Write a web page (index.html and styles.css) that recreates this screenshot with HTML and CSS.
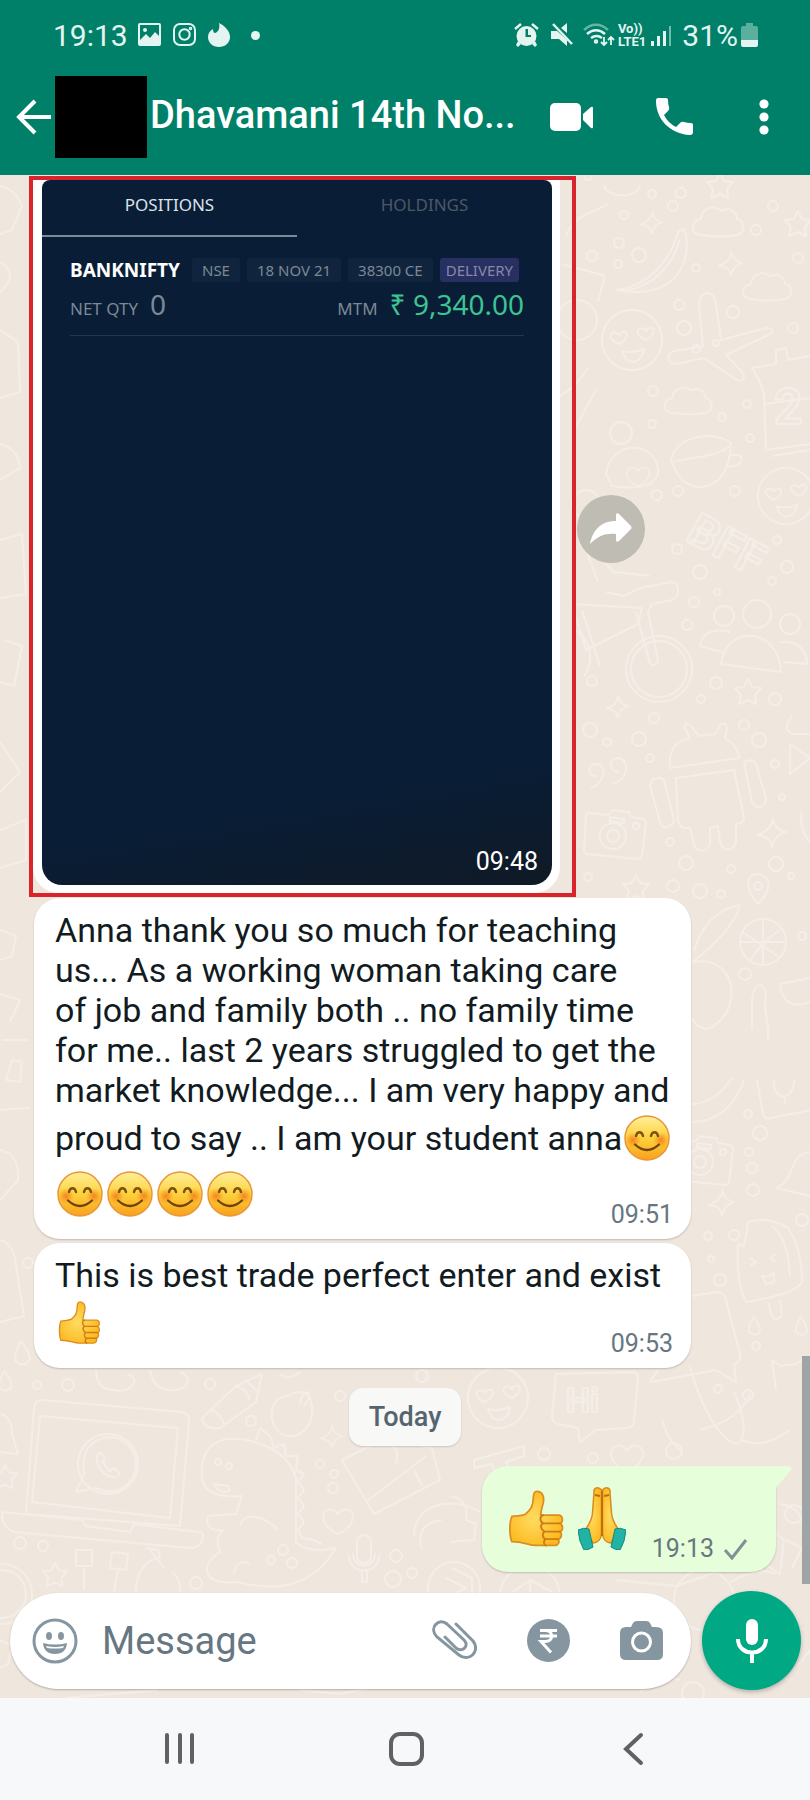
FILE: index.html
```html
<!DOCTYPE html>
<html lang="en">
<head>
  <meta charset="utf-8">
  <meta name="viewport" content="width=device-width, initial-scale=1">
  <title>Dhavamani 14th No...</title>
  <link rel="stylesheet" href="styles.css">
</head>
<body>
  <!-- shared emoji and doodle symbols -->
  <svg class="symbols" aria-hidden="true">
    <defs>
      <linearGradient id="face-fill" x1="0" y1="0" x2="0" y2="1">
        <stop offset="0" stop-color="#fff09a"/>
        <stop offset="0.5" stop-color="#fdd13c"/>
        <stop offset="1" stop-color="#f9a01b"/>
      </linearGradient>
      <radialGradient id="blush">
        <stop offset="0" stop-color="#f4701a" stop-opacity="0.8"/>
        <stop offset="1" stop-color="#f4801a" stop-opacity="0"/>
      </radialGradient>
      <radialGradient id="hand-fill" cx="0.45" cy="0.5" r="0.6">
        <stop offset="0" stop-color="#ffdc62"/>
        <stop offset="1" stop-color="#fbb81c"/>
      </radialGradient>
      <symbol id="smile" viewBox="0 0 46 46">
        <circle cx="23" cy="23" r="22" fill="url(#face-fill)" stroke="#e8963a" stroke-width="1.5"/>
        <circle cx="9" cy="25" r="8" fill="url(#blush)"/>
        <circle cx="37" cy="25" r="8" fill="url(#blush)"/>
        <path d="M12 21c1-5 6-5 7 0M27 21c1-5 6-5 7 0" fill="none" stroke="#7c5210" stroke-width="2.4" stroke-linecap="round"/>
        <path d="M11 29.500q12 11 24 0" fill="none" stroke="#6e4508" stroke-width="2.2" stroke-linecap="round"/>
      </symbol>
      <symbol id="thumb" viewBox="0 0 46 48">
        <path d="M3 22c4-1 8 0 11-2 4-3 6-7 6-12 0-4 1-6 3-6 4 0 6 4 5 9-1 4-2 7-2 10h14c4 0 4 6 1 6.500 3 1 3 6 0 6.500 2 1 2 5-1 6 1 2 0 5-3 5H22c-6 0-9-3-19-3C1 37 1 27 3 22z" fill="url(#hand-fill)" stroke="#dd8d20" stroke-width="1.4" stroke-linejoin="round"/>
        <path d="M41 27.500H29M41 34H30M40 40H30M28 21c-3 1-3 5 0 6.500-3 1-2 5 1 6.500-2 1-2 5 1 6-2 1-2 4 0 5" fill="none" stroke="#d07c14" stroke-width="1.5" stroke-linecap="round"/>
      </symbol>
      <symbol id="pray" viewBox="0 0 48 64">
        <path d="M23.500 4c-3-4-8-2-7.500 2l-1.500 21c-.5 7-3 11-7.500 17l8 13c5 0 8-4 8.500-9z" fill="url(#hand-fill)" stroke="#d98a20" stroke-width="1.500"/>
        <path d="M24.500 4c3-4 8-2 7.500 2l1.500 21c.5 7 3 11 7.500 17l-8 13c-5 0-8-4-8.500-9z" fill="url(#hand-fill)" stroke="#d98a20" stroke-width="1.500"/>
        <path d="M24 5v45M17 9l5 1M31 9l-5 1" stroke="#b96d12" stroke-width="1.800"/>
        <path d="M0 44q6-3 11-1l4 18q-4 3-9 3Q1 56 0 44zM48 44q-6-3-11-1l-4 18q4 3 9 3Q47 56 48 44z" fill="#22b3a4" stroke="#128a80" stroke-width="1"/>
      </symbol>
      <symbol id="d-star" viewBox="-16 -16 32 32" overflow="visible"><path d="M0-13l4 8 9 1-6 7 1 9-8-4-9 4 2-9-6-7 9-1z"/></symbol>
      <symbol id="d-spark" viewBox="-16 -16 32 32" overflow="visible"><path d="M2-14q0 10 12 13-10 2-13 14Q0 3-13 2 0-2 2-14z"/></symbol>
      <symbol id="d-cloud" viewBox="0 0 54 36" overflow="visible"><path d="M10 33C-3 33-2 18 9 17 10 4 25 3 29 9c8-5 16 1 16 8 9 2 8 14 0 16q-18 3-35 0z"/></symbol>
      <symbol id="d-heart" viewBox="0 0 34 30" overflow="visible"><path d="M17 28C8 24 1 17 1 9 2 0 13-1 17 7c4-8 15-7 16 2 0 8-7 15-16 19z"/></symbol>
      <symbol id="d-drop" viewBox="0 0 16 24" overflow="visible"><path d="M6 1q-8 16-4 19c5 5 13 2 12-5Q12 8 6 1z"/></symbol>
      <symbol id="d-love" viewBox="-32 -32 64 64" overflow="visible">
        <circle r="30"/>
        <path d="M-13 4c-6-2-10-7-8-10s6-2 8 1c2-4 7-4 8-1 0 4-4 8-8 10zM14 0C8-2 4-7 6-10s6-2 8 1c2-4 7-4 8-1 0 4-4 8-8 10zM-10 11q12 3 22-2-2 12-11 13-8 0-11-11z"/>
      </symbol>
      <symbol id="d-camera" viewBox="0 0 64 52" overflow="visible">
        <path d="M6 5l20 2 4-5 16 2 2 5 12 2q3 1 3 4l-4 33q-1 3-4 3L4 46q-3-1-3-4L3 8q0-3 3-3z"/>
        <circle cx="30" cy="28" r="13"/><circle cx="30" cy="28" r="6"/><circle cx="53" cy="18" r="3"/><path d="M27 9l14 2v4l-14-2z"/>
      </symbol>
      <symbol id="d-mic" viewBox="0 0 36 50" overflow="visible">
        <rect x="11" y="1" width="14" height="28" rx="7"/><path d="M3 20c-2 22 32 22 30 0M7 20c0 15 22 15 22 0M16 37v11h5V37"/>
      </symbol>
    </defs>
  </svg>

  <div class="phone">
    <header class="top">
      <div class="status-bar">
        <span class="clock">19:13</span>
        <div class="notifications">
          <svg width="23" height="23" viewBox="0 0 23 23"><path fill="#e4f5f1" fill-rule="evenodd" d="M2 0h19q2 0 2 2v19q0 2-2 2H2q-2 0-2-2V2q0-2 2-2zm0 2v15l6-6 4 4 5-6 4 4V2zM7 5a2 2 0 1 1 0 4 2 2 0 0 1 0-4z"/></svg>
          <svg width="23" height="23" viewBox="0 0 23 23" fill="none" stroke="#e4f5f1" stroke-width="2"><rect x="1" y="1" width="21" height="21" rx="6"/><circle cx="11.500" cy="11.500" r="5.200"/><circle cx="17.500" cy="5.500" r=".8"/></svg>
          <svg width="22" height="24" viewBox="0 0 22 24"><path fill="#e4f5f1" d="M11 0c6 3 11 8 11 14 0 6-5 10-11 10S0 20 0 14C0 10 2 8 5 6c0 3 1 4 2 4 4-1 5-6 4-10z"/></svg>
        </div>
        <span class="dot"></span>
        <div class="indicators">
          <svg width="25" height="24" viewBox="0 0 25 24" fill="#e4f5f1"><path fill-rule="evenodd" d="M12.500 3a10 10 0 1 1 0 20 10 10 0 0 1 0-20zM11.500 6v8H17v-2h-3V6z"/><path d="M4 18l3 3-3 3-2-2zM21 18l-3 3 3 3 2-2z"/><path d="M1 6l6-5M24 6l-6-5" stroke="#e4f5f1" stroke-width="2.500"/></svg>
          <svg class="mute" width="22" height="24" viewBox="0 0 22 24" fill="#e4f5f1"><path d="M0 8h6l10 9v6l-8-7H0zM16 0v10l-6-5z"/><path d="M2 1l19 20" stroke="#e4f5f1" stroke-width="2.500"/></svg>
          <svg width="32" height="24" viewBox="0 0 32 24" fill="none" stroke="#e4f5f1" stroke-width="2.400"><path d="M1 7c7-7 17-7 24 0" opacity=".45"/><path d="M4 11c6-5 12-5 18 0M8 15c4-3 7-3 11 0"/><circle cx="13" cy="18.500" r="1"/><path d="M21 14v8m-3-3l3 3 3-3M28 22v-8m-3 3l3-3 3 3" stroke-width="1.800"/></svg>
          <span class="volte">Vo))<br>LTE1</span>
          <svg width="21" height="24" viewBox="0 0 21 24" fill="#e4f5f1"><path d="M0 18h3v5H0zM6 13h3v10H6zM12 8h3v15h-3z"/><path d="M18 3h2v20h-2z" opacity=".5"/></svg>
        </div>
        <span class="battery-level">31%</span>
        <svg width="17" height="24" viewBox="0 0 17 24" fill="#e4f5f1"><path d="M5 0h7v3h3q2 0 2 2v12H0V5q0-2 2-2h3z" opacity=".4"/><path d="M0 17h17v5q0 2-2 2H2q-2 0-2-2z"/></svg>
      </div>

      <div class="app-bar">
        <button class="icon-btn" aria-label="Back">
          <svg width="36" height="36" viewBox="0 0 36 36" fill="none" stroke="#fff" stroke-width="4"><path d="M35 18H4M19 2L3 18l16 16"/></svg>
        </button>
        <div class="avatar"></div>
        <h1 class="title">Dhavamani 14th No...</h1>
        <div class="actions">
          <button class="icon-btn" aria-label="Video call">
            <svg width="44" height="28" viewBox="0 0 44 28" fill="#fff"><rect width="31" height="28" rx="5"/><path d="M33 11l8-7q2-1 2 1v19q0 2-2 1l-8-8z"/></svg>
          </button>
          <button class="icon-btn" aria-label="Voice call">
            <svg width="37" height="37" viewBox="0 0 37 37" fill="#fff"><path d="M2 0h8q2 0 2 2 0 4 1 7 1 2-1 4l-4 4q4 8 12 12l4-4q2-2 4-1 3 1 7 1 2 0 2 2v7q0 3-3 3C14 36 0 21 0 3q0-3 2-3z"/></svg>
          </button>
          <button class="icon-btn menu" aria-label="More options">
            <svg width="10" height="36" viewBox="0 0 10 36" fill="#fff"><circle cx="5" cy="5" r="4.600"/><circle cx="5" cy="18" r="4.600"/><circle cx="5" cy="31" r="4.600"/></svg>
          </button>
        </div>
      </div>
    </header>

    <main class="chat">
      <svg class="wallpaper" viewBox="0 175 810 1523" preserveAspectRatio="xMidYMin slice" aria-hidden="true">
        <!-- right hand side -->
        <use href="#d-cloud" x="692" y="200" width="54" height="40"/>
        <use href="#d-cloud" x="742" y="268" width="52" height="34"/>
        <use href="#d-cloud" x="664" y="382" width="50" height="34"/>
        <use href="#d-star" x="782" y="208" width="32" height="32"/>
        <use href="#d-star" x="704" y="170" width="32" height="32"/>
        <use href="#d-spark" x="638" y="210" width="26" height="26"/>
        <use href="#d-spark" x="716" y="250" width="28" height="28"/>
        <path d="M616 290c32-4 54-28 62-58l6-3 2 6c5 34-16 65-70 55zM622 291c30-3 50-24 58-52M604 185c3 14 34 14 36 0M566 236c8-22 26-22 42-32M561 264l38 10q6 1 5 6l-6 22"/>
        <circle cx="577" cy="320" r="20"/>
        <use href="#d-love" x="600" y="308" width="64" height="64"/>
        <path d="M703 346l-4-40c0-18 16-16 17-2l5 36 45-12c8 0 8 4 2 7l-42 20 17 18c3 8-4 10-9 5l-30-20-28 6c-12-2-8-12-1-13z"/>
        <path d="M752 368l24-4 0-14 10-2 2 12 22-4M752 368q8 12 12 26l2 56 44-6M772 456l38-6M764 404l46-6"/>
        <text class="doodle-text" x="774" y="424" font-size="50">2</text>
        <path d="M671 460q10 28 30 27 28-2 30-44c-20-14-56-6-60 17zM674 462c20-6 40-4 56-16M730 456c18-6 14 14-4 10"/>
        <use href="#d-love" x="756" y="466" width="60" height="60"/>
        <text class="doodle-text" x="684" y="540" font-size="46" transform="rotate(28 684 540)">BFF</text>
        <path d="M606 474c4-36 54-34 52 0q-6 18-46 12zM554 400c24-14 30-26 34-32M574 430l22-40"/>
        <use href="#d-heart" x="626" y="466" width="24" height="22"/>
        <circle cx="621" cy="433" r="11"/><circle cx="586" cy="504" r="14"/>
        <circle cx="659" cy="669" r="33"/><circle cx="659" cy="669" r="28"/>
        <path d="M572 604l70 4-4 16-52 26zM606 592l18 4 16-8 32-6c8 0 8 16 0 18l-20 4-4 8 10 48q-2 8-8 4l-14-52M582 610l18 56M576 630c16 12 18 32 8 46M594 552l20 20 36 4M586 550l12 32"/>
        <circle cx="724" cy="616" r="10"/><circle cx="757" cy="614" r="14"/><circle cx="790" cy="624" r="10"/>
        <path d="M721 664c4-40 58-38 60 8zM722 652l-22-6c2-14 14-18 30-14M783 662l24 2c0-14-10-24-26-22"/>
        <use href="#d-star" x="732" y="676" width="32" height="32"/>
        <use href="#d-spark" x="604" y="694" width="26" height="26"/>
        <use href="#d-spark" x="754" y="816" width="34" height="34"/>
        <path d="M591 788c12-4 18-22 6-24-12 0-8 14 0 12M613 784c14-4 18-22 6-26-12 0-10 14 0 14"/>
        <path d="M670 768c-2-20 8-28 20-30l-6-12q4-4 7 0l8 10 16-2 6-10q5-2 6 4l-2 10c10 6 14 14 14 20zM676 778l58-8 10 48q0 6-8 6l0 18c-2 10-14 10-16 0l-2-16-8 2 0 16c-4 10-14 8-16 0l-4-16-6 0q-4 0-6-8zM652 780q8-4 12 0l10 40c-2 8-12 10-14 2l-10-36zM744 762q8-4 12 2l10 34c0 10-10 12-14 4z"/>
        <use href="#d-camera" x="583" y="808" width="64" height="52"/>
        <use href="#d-star" x="620" y="872" width="32" height="32"/>
        <path d="M792 716q-10 12 0 18l18 0M790 744l20 14-20 16zM802 812q-4 16 8 30"/>
        <circle cx="763" cy="942" r="23"/><path d="M742 932q22 14 38 26M750 960q14-20 30-30M763 919l0 46M740 942l46 0"/>
        <path d="M758 904c-14-16-12-30 0-30 14 2 14 16 0 30zM740 905q-34 6-46 46M740 905q-6 24-46 56M692 962c44-8 50 44 24 62-10 10-20 2-24-6M752 1030l0-26c0-20 10-24 14-12-4 18 4 30 2 48M780 984l30-6M780 984c2 20 14 24 30 18"/>
        <circle cx="758" cy="886" r="4"/>
        <path d="M692 1122c26 0 44-18 52-42M692 1104c20 0 32-14 40-26M757 1080l6 34q2 6 8 4l40-8M774 1080c-2 22 20 22 20 0M785 1098l0 6"/>
        <use href="#d-camera" x="670" y="1134" width="64" height="52"/>
        <path d="M776 1188c20-8 12-34 34-36M776 1188l34 8"/>
        <use href="#d-spark" x="706" y="1188" width="30" height="30"/>
        <path d="M746 1236l2-14q22-6 40 6 14 20 14 54-6 12-56 20-10-20-8-58l6 2zM768 1302l4 14q4 6 10 0l-2-16M750 1258l6 4-6 4M776 1254l-6 4 6 4M762 1276q8 2 12-4l0 10-8 2zM772 1226q16 12 18 50"/>
        <path d="M692 1296l24-4q8 0 10 8l14 54q2 8-6 10l2 18-20-12-64 12M772 1360l8 6 16-2 8-6M772 1360l4 30M650 1382l8-12"/>
        <use href="#d-drop" x="748" y="1316" width="14" height="20"/>
        <use href="#d-drop" x="795" y="1316" width="14" height="20"/>

        <!-- left edge -->
        <path d="M0 186q16 4 22 20l-10 24-12 4M0 262q20 12 0 30M0 330l18 12 2 50-20 6M0 444q18 4 20 24l-20 12M0 540l22-6 4 60-26 4M4 640l18 6-8 40-14-4M0 742l20 30-20 20M0 830l26-10 0 40-26 8M0 930l16 6-4 20-12 4M0 994l20 6-10 22M2 1040l26 0M6 1080l6-20 10 2-2 20zM0 1110l30-2M0 1240q14 4 16 26l8 50-24 6M0 1150q20 4 18 30L0 1200"/>
        <use href="#d-drop" x="14" y="1340" width="18" height="26"/>
        <use href="#d-drop" x="-2" y="1370" width="16" height="22"/>

        <!-- strip between the bubbles and the composer -->
        <path d="M42 1400l140 12q8 2 7 10l-9 104-154-12 8-106q0-8 8-8zM40 1416l138 12-8 90-138-16zM2 1512l80 8 4 6 44 6 4-8 64 8q8 0 4 8-2 8-12 8L14 1532q-12-4-12-20z"/>
        <circle cx="108" cy="1464" r="30"/><path d="M84 1474l-8 18 20-4c20 10 40-4 40-24-2-38-60-36-52 10z"/>
        <path d="M98 1454c-6 14 14 30 22 20l-6-6-4 3-8-9 3-3-4-6z"/>
        <path d="M0 1414q12 2 12 20l6 20-18-2M96 1370q0 20 18 20c16 4 28-10 14-16M150 1370q4 22 24 20c16 0 18-14 6-18M202 1418l34-32 26-12-6 28-36 26q-16 2-18-10zM210 1410q10 2 14 14M236 1386q10 2 14 14M246 1380l12 12"/>
        <path d="M289 1396q10-8 20 0c10 24-6 42-20 40-20 0-26-40 0-40zM300 1404q2-12 8-12 2 8-4 14M280 1374q8 8 20-2"/>
        <path d="M202 1478c-4-48 40-44 68-30q20 10 26 30l0 64q12 12 40 6-20 34-56 38-20 2-42-4c-40 4-36-20-18-30q-6-16 4-22-20 2-16-14l28-2 6-18c-24 2-38-4-40-18zM256 1440l4-12 10 8 4 12 10-4 2 12 12 0-2 14 8 4-6 8 6 8-6 8 6 8-6 8 6 8-6 8 4 8 12 2 8 4M240 1526c4-18 30-6 38 4M214 1484l14 2q4 6-4 6-8-2-10-8zM234 1574q2-16 16-10"/>
        <circle cx="218" cy="1462" r="3"/><circle cx="229" cy="1466" r="3"/>
        <path d="M342 1460l44-22 46 10 8 32-66 34zM366 1502l60-46M392 1444q8 8 4 20M414 1470l8 16"/>
        <use href="#d-heart" x="320" y="1508" width="36" height="28"/>
        <use href="#d-mic" x="346" y="1534" width="36" height="50"/>
        <use href="#d-spark" x="318" y="1424" width="26" height="26"/>
        <use href="#d-star" x="-10" y="1462" width="30" height="30"/>
        <use href="#d-star" x="40" y="1560" width="30" height="30"/>
        <path d="M76 1550l16 0 0 16-16 0zM112 1552l16 2-2 16-16-2zM84 1568l0 22M118 1570l-4 22M136 1592c0-30 20-34 24-34l-2-8-12-2M150 1550l14 18M172 1572q10 8 8 22M414 1536c0-34 40-40 66-24M422 1550q-8-26 20-30"/>
        <circle cx="2" cy="1594" r="30"/><circle cx="2" cy="1594" r="24"/>
        <use href="#d-love" x="466" y="1366" width="64" height="64"/>
        <path d="M556 1374l76-2q6 0 6 6l-4 44q0 6-8 6l-30 2-16 12-2-14-20-4q-6-2-6-8z"/>
        <text class="doodle-text" x="566" y="1412" font-size="34">Hi</text>
        <path d="M474 1460l50-14 0 10-18 6 2 6-14 2-2-6-18 4zM690 1366c10 40 30 76 48 78 12-10 2-40-4-52M662 1420q8 26 20 30M700 1430q40-10 50-36M742 1440q20 10 48-10"/>
        <use href="#d-heart" x="610" y="1444" width="34" height="30"/>
        <path d="M450 1496q20 4 16 24l10 4-2 16-24 2M780 1504q26 4 22 30M786 1540l16 8-10 20M452 1568l20 10 0 20"/>
        <circle cx="454" cy="1588" r="26"/><circle cx="530" cy="1596" r="30"/><path d="M446 1578l20 10-20 10M510 1594l20-14 22 12M530 1580l0 20M616 1580l60 6 40-14M730 1582q30-16 46-8M760 1520l24 20-4 34-30-20z"/>
        <circle cx="794" cy="1514" r="9"/><circle cx="704" cy="1600" r="30"/><circle cx="693" cy="1693" r="11"/>
        <path d="M66 1698l92-8M300 1690l40 4 30-6M640 1692q20-20 40-12M786 1680l24-30M0 1640l12 6-4 18-8 4"/>

        <!-- loose bubbles -->
        <circle cx="588" cy="176" r="4"/><circle cx="652" cy="194" r="4"/><circle cx="681" cy="193" r="5"/><circle cx="673" cy="206" r="5"/>
        <circle cx="624" cy="215" r="4"/><circle cx="619" cy="243" r="5"/><circle cx="639" cy="255" r="7"/><circle cx="618" cy="264" r="4"/><circle cx="592" cy="256" r="5"/>
        <circle cx="696" cy="268" r="4"/><circle cx="756" cy="230" r="5"/><circle cx="773" cy="206" r="5"/><circle cx="798" cy="258" r="5"/><circle cx="679" cy="305" r="5"/>
        <circle cx="684" cy="328" r="7"/><circle cx="733" cy="312" r="6"/><circle cx="793" cy="328" r="5"/><circle cx="696" cy="349" r="4"/><circle cx="716" cy="343" r="3"/>
        <circle cx="653" cy="391" r="5"/><circle cx="652" cy="424" r="4"/><circle cx="722" cy="417" r="4"/><circle cx="747" cy="404" r="4"/><circle cx="750" cy="438" r="4"/>
        <circle cx="678" cy="491" r="5"/><circle cx="735" cy="491" r="5"/><circle cx="657" cy="495" r="5"/><circle cx="677" cy="549" r="5"/><circle cx="700" cy="572" r="7"/>
        <circle cx="777" cy="540" r="4"/><circle cx="787" cy="567" r="6"/><circle cx="772" cy="581" r="4"/><circle cx="694" cy="602" r="5"/><circle cx="717" cy="592" r="3"/>
        <circle cx="687" cy="625" r="5"/><circle cx="716" cy="683" r="6"/><circle cx="775" cy="699" r="6"/><circle cx="701" cy="699" r="4"/><circle cx="592" cy="681" r="5"/>
        <circle cx="654" cy="718" r="5"/><circle cx="639" cy="739" r="7"/><circle cx="590" cy="730" r="7"/><circle cx="607" cy="742" r="4"/><circle cx="650" cy="758" r="4"/>
        <circle cx="744" cy="725" r="5"/><circle cx="759" cy="740" r="7"/><circle cx="775" cy="764" r="4"/><circle cx="782" cy="797" r="3"/><circle cx="670" cy="842" r="4"/>
        <circle cx="686" cy="863" r="7"/><circle cx="731" cy="869" r="4"/><circle cx="776" cy="864" r="7"/><circle cx="700" cy="891" r="7"/><circle cx="673" cy="886" r="6"/>
        <circle cx="588" cy="877" r="4"/><circle cx="721" cy="894" r="4"/><circle cx="791" cy="876" r="3"/><circle cx="745" cy="974" r="6"/><circle cx="802" cy="936" r="4"/>
        <circle cx="748" cy="1114" r="4"/><circle cx="760" cy="1133" r="7"/><circle cx="749" cy="1152" r="4"/><circle cx="752" cy="1168" r="5"/><circle cx="753" cy="1190" r="6"/>
        <circle cx="708" cy="1236" r="4"/><circle cx="734" cy="1235" r="5"/><circle cx="711" cy="1259" r="3"/><circle cx="720" cy="1280" r="6"/><circle cx="802" cy="1220" r="6"/>
        <circle cx="756" cy="1346" r="4"/><circle cx="748" cy="1395" r="5"/><circle cx="718" cy="1389" r="4"/><circle cx="28" cy="1263" r="5"/><circle cx="37" cy="1385" r="4"/>
        <circle cx="68" cy="1385" r="6"/><circle cx="210" cy="1384" r="5"/><circle cx="251" cy="1421" r="5"/><circle cx="340" cy="1396" r="5"/><circle cx="422" cy="1376" r="6"/>
        <circle cx="320" cy="1464" r="4"/><circle cx="334" cy="1474" r="4"/><circle cx="333" cy="1488" r="5"/><circle cx="20" cy="1543" r="6"/><circle cx="43" cy="1546" r="5"/>
        <circle cx="283" cy="1550" r="5"/><circle cx="271" cy="1560" r="4"/><circle cx="292" cy="1563" r="5"/><circle cx="396" cy="1556" r="6"/><circle cx="412" cy="1573" r="5"/>
        <circle cx="393" cy="1579" r="8"/><circle cx="196" cy="1583" r="6"/><circle cx="544" cy="1454" r="6"/><circle cx="593" cy="1458" r="5"/><circle cx="674" cy="1451" r="8"/>
      </svg>

      <div class="messages">
        <div class="media-row">
          <div class="highlight">
            <div class="media-bubble">
              <section class="trade">
                <div class="trade-tabs">
                  <button class="tab active">POSITIONS</button>
                  <button class="tab">HOLDINGS</button>
                </div>
                <div class="position">
                  <div class="position-head">
                    <strong>BANKNIFTY</strong>
                    <span class="tag">NSE</span>
                    <span class="tag">18 NOV 21</span>
                    <span class="tag">38300 CE</span>
                    <span class="tag delivery">DELIVERY</span>
                  </div>
                  <div class="position-values">
                    <span>NET QTY</span>
                    <span class="qty">0</span>
                    <span class="mtm">MTM</span>
                    <span class="profit">₹ 9,340.00</span>
                  </div>
                </div>
                <time class="media-time">09:48</time>
              </section>
            </div>
          </div>
          <button class="forward" aria-label="Forward">
            <svg width="42" height="32" viewBox="0 0 42 32"><path fill="#fff" d="M0 31C3 15 13 8 26 8V2q0-3 3-1l12 12q1 2 0 3L29 28q-3 2-3-1v-6C15 20 8 23 0 31z"/></svg>
          </button>
        </div>

        <div class="bubble">
          Anna thank you so much for teaching us... As a working woman taking care<br>
          of job and family both .. no family time for me.. last 2 years struggled to get the market knowledge... I am very happy and proud to say .. I am your student anna<svg class="emoji" role="img" aria-label="smiling face"><use href="#smile"/></svg><br>
          <time class="time">09:51</time><svg class="emoji" role="img" aria-label="smiling face"><use href="#smile"/></svg><svg class="emoji" role="img" aria-label="smiling face"><use href="#smile"/></svg><svg class="emoji" role="img" aria-label="smiling face"><use href="#smile"/></svg><svg class="emoji" role="img" aria-label="smiling face"><use href="#smile"/></svg>
        </div>

        <div class="bubble">
          This is best trade perfect enter and exist<br>
          <time class="time">09:53</time><svg class="emoji" role="img" aria-label="thumbs up"><use href="#thumb"/></svg>
        </div>

        <div class="day">Today</div>

        <div class="bubble-out">
          <svg class="tail" width="16" height="24" viewBox="0 0 16 24" aria-hidden="true"><path fill="#e6ffda" d="M0 0h12q5 1 2 5L0 22z"/></svg>
          <svg class="emoji-big" width="58" height="62" role="img" aria-label="thumbs up"><use href="#thumb"/></svg>
          <svg class="emoji-big" width="48" height="64" role="img" aria-label="folded hands"><use href="#pray"/></svg>
          <time class="time-out">19:13</time>
          <svg class="tick" width="25" height="22" viewBox="0 0 25 22" role="img" aria-label="Sent"><path d="M2 12l7 8L23 2" fill="none" stroke="#7f9196" stroke-width="3"/></svg>
        </div>
      </div>

      <form class="composer">
        <div class="field">
          <button type="button" class="icon-btn" aria-label="Emoji">
            <svg width="46" height="46" viewBox="0 0 46 46" fill="#8696a0"><circle cx="23" cy="23" r="21" fill="none" stroke="#8696a0" stroke-width="3"/><ellipse cx="17" cy="18" rx="3" ry="4"/><ellipse cx="29" cy="18" rx="3" ry="4"/><path fill-rule="evenodd" d="M11 25q12 3 24 0-1 11-12 11T11 25zm3 3q9 2 18 0l-1 2q-8 1-16 0z"/></svg>
          </button>
          <input type="text" class="message-input" placeholder="Message" aria-label="Message">
          <button type="button" class="icon-btn" aria-label="Attach">
            <svg width="46" height="42" viewBox="0 0 46 42" fill="none" stroke="#8696a0" stroke-width="3" stroke-linecap="round"><path d="M25 4l17 17c8 10-4 22-14 14L6 17C-3 8 8-3 16 4l17 16c6 6-2 13-8 8L14 17"/></svg>
          </button>
          <button type="button" class="icon-btn" aria-label="Payment">
            <svg width="43" height="43" viewBox="0 0 43 43"><circle cx="21.500" cy="21.500" r="21.500" fill="#8696a0"/><path d="M13 11.500h17M13 17h17M14 11.500h4c9 0 9 11 0 11h-4l10 11" fill="none" stroke="#fff" stroke-width="3"/></svg>
          </button>
          <button type="button" class="icon-btn" aria-label="Camera">
            <svg width="43" height="40" viewBox="0 0 43 40"><path fill="#8696a0" d="M13 2q1-2 4-2h9q3 0 4 2l2 4h4q7 0 7 6v21q0 6-6 6H6q-6 0-6-6V12q0-6 6-6h5z"/><circle cx="21.500" cy="21" r="9" fill="none" stroke="#fff" stroke-width="3"/></svg>
          </button>
        </div>
        <button type="button" class="record" aria-label="Record voice message">
          <svg width="32" height="44" viewBox="0 0 32 44"><rect x="10" width="12" height="26" rx="6" fill="#fff"/><path d="M2 20c0 18 28 18 28 0M16 33v11" fill="none" stroke="#fff" stroke-width="4"/></svg>
        </button>
      </form>
      <div class="scroll-thumb"></div>
    </main>

    <nav class="nav-bar">
      <button class="icon-btn" aria-label="Recents">
        <svg width="32" height="34" viewBox="0 0 32 34" stroke="#606164" stroke-width="4" stroke-linecap="round"><path d="M3 3v27M16 3v27M28 3v27"/></svg>
      </button>
      <button class="icon-btn" aria-label="Home">
        <svg width="36" height="34" viewBox="0 0 36 34"><rect x="2" y="2" width="31" height="30" rx="9" fill="none" stroke="#606164" stroke-width="4"/></svg>
      </button>
      <button class="icon-btn" aria-label="Go back">
        <svg width="22" height="34" viewBox="0 0 22 34" fill="none" stroke="#606164" stroke-width="4" stroke-linecap="round"><path d="M18 3L3 17l15 14"/></svg>
      </button>
    </nav>
  </div>
</body>
</html>
```

FILE: styles.css
```css
* {
  box-sizing: border-box;
}

body {
  margin: 0;
  font-family: Roboto, "Noto Sans", sans-serif;
  background-color: #efe7de;
  color: #111b21;
}

svg {
  flex-shrink: 0;
}

.symbols {
  position: absolute;
  width: 0;
  height: 0;
}

.phone {
  display: flex;
  flex-direction: column;
  min-height: 100vh;
}

.icon-btn {
  display: flex;
  align-items: center;
  justify-content: center;
  padding: 0;
  border: none;
  background: none;
  cursor: pointer;
}

/* Status bar and app bar */
.top {
  background-color: #008069;
  color: #fff;
}

.status-bar {
  display: flex;
  align-items: center;
  height: 64px;
  padding: 6px 52px 0 53px;
  color: #e4f5f1;
}

.clock,
.battery-level {
  font-size: 30px;
}

.notifications {
  display: flex;
  gap: 12px;
  margin-left: 10px;
}

.dot {
  width: 9px;
  height: 9px;
  margin-left: 21px;
  border-radius: 50%;
  background-color: #e4f5f1;
}

.indicators {
  display: flex;
  align-items: center;
  margin-left: auto;
  margin-right: 10px;
}

.mute {
  margin: 0 10px 0 12px;
}

.volte {
  margin: 0 5px 0 3px;
  font-size: 13px;
  font-weight: 700;
  line-height: 13px;
}

.battery-level {
  margin-right: 3px;
}

.app-bar {
  display: flex;
  align-items: center;
  height: 111px;
  padding: 0 41px 6px 16px;
}

.avatar {
  flex-shrink: 0;
  width: 92px;
  height: 82px;
  margin: 0 3px;
  background-color: #000;
}

.title {
  flex: 1;
  margin: 0;
  padding-bottom: 3px;
  overflow: hidden;
  font-size: 38px;
  font-weight: 500;
  line-height: 48px;
  white-space: nowrap;
}

.actions {
  display: flex;
  align-items: center;
  gap: 62px;
}

.menu {
  margin-left: 4px;
}

/* Chat area */
.chat {
  position: relative;
  display: flex;
  flex: 1;
  flex-direction: column;
  background-color: #efe7de;
  overflow: hidden;
}

.wallpaper {
  position: absolute;
  inset: 0;
  width: 100%;
  height: 100%;
  fill: none;
  stroke: #f5eee8;
  stroke-width: 2;
  stroke-linejoin: round;
}

.doodle-text {
  font-family: Roboto, sans-serif;
  font-weight: 700;
}

.messages {
  position: relative;
  display: flex;
  flex: 1;
  flex-direction: column;
  align-items: flex-start;
  padding: 1px 34px 0;
}

.media-row {
  display: flex;
  align-items: center;
  align-self: stretch;
  margin-left: -5px;
}

.highlight {
  width: calc(100% - 200px);
  padding-right: 12px;
  border: 4px solid #d9242b;
}

.media-bubble {
  padding: 0 8px 8px 9px;
  border-radius: 0 0 26px 26px;
  background-color: #fff;
}

.trade {
  display: flex;
  flex-direction: column;
  aspect-ratio: 510 / 705;
  border-radius: 8px 8px 20px 20px;
  background: linear-gradient(170deg, #091d36 84%, #101a26);
  font-family: "Noto Sans", sans-serif;
  color: #7d8896;
}

.trade-tabs {
  display: grid;
  grid-template-columns: 1fr 1fr;
}

.tab {
  height: 57px;
  padding: 0 0 6px;
  border: none;
  border-bottom: 2px solid transparent;
  background: none;
  font-family: inherit;
  font-size: 17px;
  color: #4d5866;
}

.tab.active {
  border-bottom-color: #7d8b99;
  color: #dce2e9;
}

.position {
  margin: 20px 28px 0;
  border-bottom: 1px solid #26374c;
}

.position-head {
  display: flex;
  align-items: center;
  gap: 7px;
  white-space: nowrap;
}

.position-head strong {
  margin-right: 5px;
  font-size: 19px;
  line-height: 26px;
  color: #fff;
}

.tag {
  padding: 0 10px;
  border-radius: 3px;
  background-color: #10253d;
  font-size: 15px;
  line-height: 24px;
}

.tag.delivery {
  padding: 0 6px;
  background-color: #273060;
  color: #8389ab;
}

.position-values {
  display: flex;
  align-items: baseline;
  padding-bottom: 5px;
  font-size: 17px;
  line-height: 42px;
}

.qty {
  margin-left: 12px;
  font-size: 28px;
}

.mtm {
  margin-left: auto;
}

.profit {
  margin-left: 12px;
  font-size: 28px;
  color: #3cc492;
}

.media-time {
  margin: auto 14px 8px auto;
  font-family: Roboto, sans-serif;
  font-size: 25px;
  line-height: 30px;
  color: #fff;
}

.forward {
  display: flex;
  align-items: center;
  justify-content: center;
  flex-shrink: 0;
  width: 68px;
  height: 68px;
  margin: 0 0 16px 1px;
  padding: 0;
  border: none;
  border-radius: 50%;
  background-color: #bfbcb3;
  cursor: pointer;
}

.bubble {
  display: flow-root;
  width: 657px;
  max-width: 100%;
  margin-top: 1px;
  padding: 12px 14px 9px 21px;
  border-radius: 26px;
  background-color: #fff;
  box-shadow: 0 1px 2px rgba(0, 0, 0, 0.2);
  font-size: 34px;
  line-height: 40px;
}

.bubble + .bubble {
  margin-top: 4px;
}

.emoji {
  width: 46px;
  height: 46px;
  margin: 5px 2px;
  vertical-align: -16px;
}

.time {
  float: right;
  margin: 34px 4px 0 0;
  font-size: 25px;
  line-height: 30px;
  color: #667781;
}

.day {
  align-self: center;
  margin: 20px 0;
  padding: 0 20px;
  border-radius: 14px;
  background-color: #f8f8f7;
  box-shadow: 0 1px 2px rgba(0, 0, 0, 0.15);
  font-size: 27px;
  font-weight: 500;
  line-height: 58px;
  color: #54656f;
}

.bubble-out {
  position: relative;
  display: flex;
  align-items: flex-end;
  align-self: flex-end;
  padding: 20px 28px 10px 26px;
  border-radius: 26px 0 26px 26px;
  background-color: #e6ffda;
  box-shadow: 0 1px 2px rgba(0, 0, 0, 0.2);
}

.tail {
  position: absolute;
  top: 0;
  left: 100%;
}

.emoji-big {
  margin: 0 12px 12px 0;
}

.time-out {
  margin-left: 14px;
  font-size: 25px;
  line-height: 26px;
  color: #667781;
}

.tick {
  margin: 0 0 2px 9px;
}

/* Composer */
.composer {
  position: relative;
  display: flex;
  align-items: center;
  gap: 11px;
  padding: 18px 9px 8px 10px;
}

.field {
  display: flex;
  flex: 1;
  align-items: center;
  gap: 50px;
  min-width: 0;
  height: 96px;
  padding: 0 28px 0 22px;
  border-radius: 48px;
  background-color: #fff;
  box-shadow: 0 1px 2px rgba(0, 0, 0, 0.25);
}

.message-input {
  flex: 1;
  min-width: 0;
  margin-left: -26px;
  padding: 0;
  border: none;
  outline: none;
  background: none;
  font-family: inherit;
  font-size: 38px;
  color: #111b21;
}

.message-input::placeholder {
  color: #667781;
}

.record {
  display: flex;
  align-items: center;
  justify-content: center;
  width: 99px;
  height: 99px;
  padding: 0;
  border: none;
  border-radius: 50%;
  background-color: #00a884;
  box-shadow: 0 2px 4px rgba(0, 0, 0, 0.25);
  cursor: pointer;
}

.scroll-thumb {
  position: absolute;
  right: 0;
  bottom: 114px;
  width: 8px;
  height: 228px;
  background-color: #9fa5a6;
}

/* System navigation */
.nav-bar {
  display: grid;
  grid-template-columns: repeat(3, 1fr);
  height: 102px;
  padding: 0 62px 0 66px;
  background-color: #f7f8fa;
}
```
